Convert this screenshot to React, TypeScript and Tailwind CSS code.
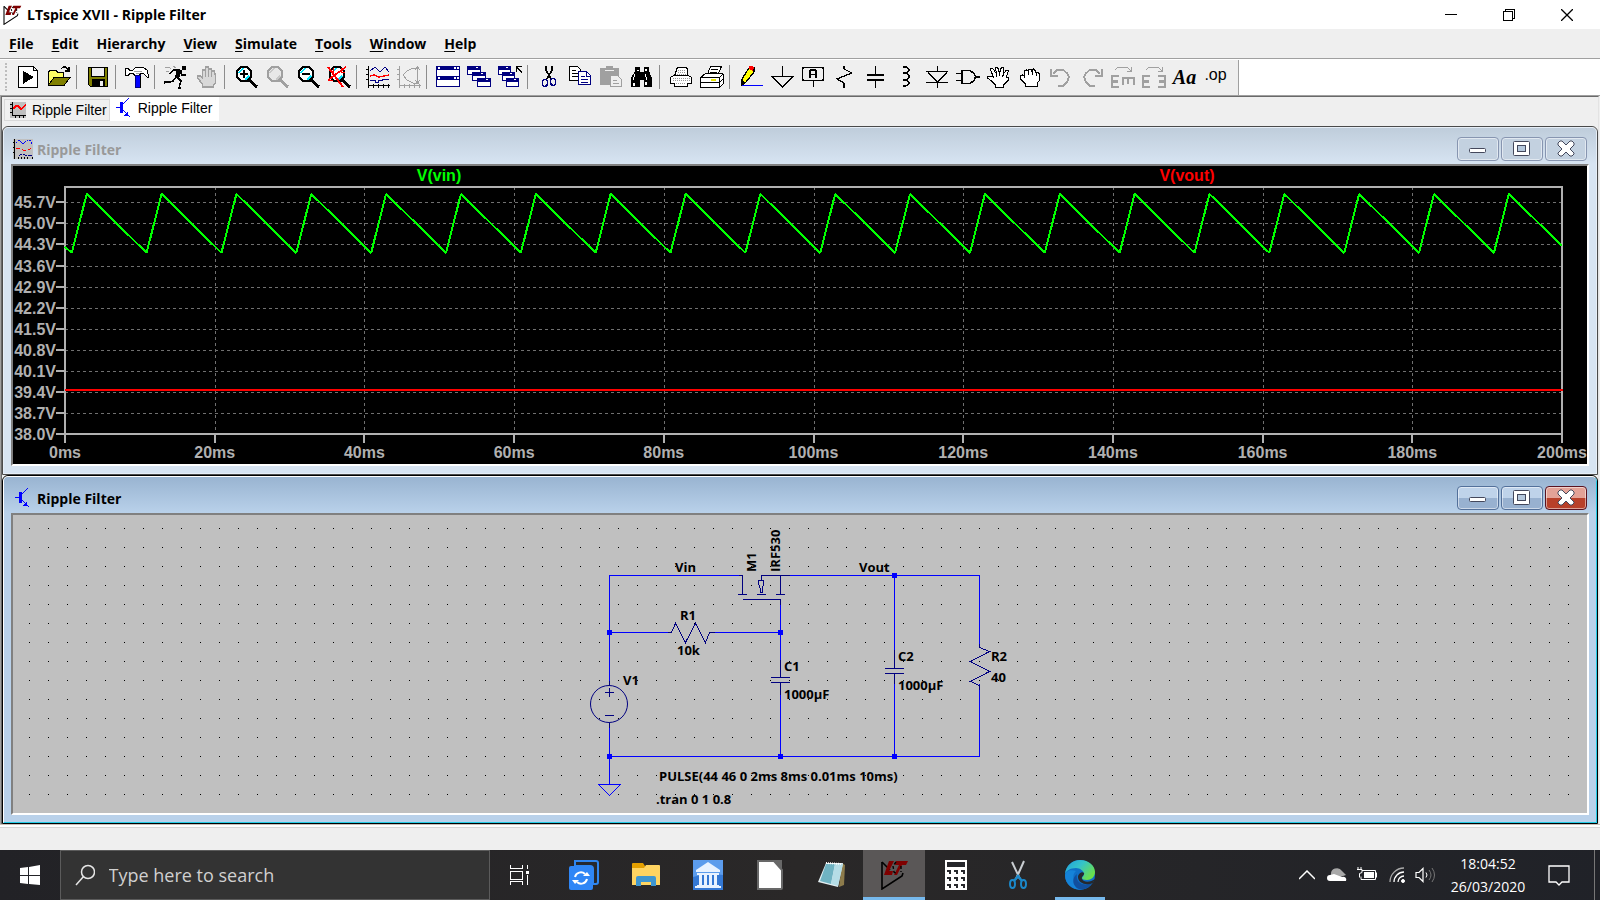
import React, { FC, ReactNode } from "react";

interface ToolItem {
  label: string;
  icon: ReactNode;
  disabled?: boolean;
}

interface MdiWindowProps {
  title: string;
  icon: ReactNode;
  active?: boolean;
  children: ReactNode;
}

const Icon: FC<{ children: ReactNode }> = ({ children }) => (
  <svg width="24" height="24" viewBox="0 0 24 24" fill="none" shapeRendering="crispEdges" aria-hidden="true">
    {children}
  </svg>
);

const Lens: FC<{ color: string; glass: string; shine: string }> = ({ color, glass, shine }) => (
  <>
    <path d="M7 2h6l4 4v6l-4 4H7l-4-4V6z" fill={glass} stroke={color} strokeWidth="1.6" />
    <path d="M5 8l4-5M11 15l4-4" stroke={shine} strokeWidth="1.5" />
    <path d="M15 15l8 7" stroke={color} strokeWidth="3" />
  </>
);

const LtLogo: FC<{ size: number }> = ({ size }) => (
  <svg width={size} height={size} viewBox="0 0 30 30" fill="none" aria-hidden="true">
    <path d="M3 2v27L23 16l1-3" stroke="#000" strokeWidth="1.6" />
    <path d="M3 2l8 8" stroke="#000" strokeWidth="1.6" />
    <path d="M10 1h5l-5 10h4l-1 4H5z" fill="#7f0000" />
    <path d="M17 1h12l-2 4h-4l-5 10h-3l5-10h-4z" fill="#7f0000" />
    <path d="M17 2l-3 4 1 6 3 2M22 6v6" stroke="#000" strokeWidth="1.4" strokeDasharray="3 2" />
  </svg>
);

const WaveIcon: FC = () => (
  <svg width="20" height="20" viewBox="0 0 20 20" fill="none" shapeRendering="crispEdges" aria-hidden="true">
    <path fill="#c0c0c0" d="M0 0h20v20H0z" />
    <path d="M1 0v20M0 3h2M0 8h2M0 13h2M5 20v-2M8 20v-2M11 20v-2M14 20v-2M19 20v-2" stroke="#000" />
    <path d="M3 4l3-3 4 4 4-4h3l2 4" stroke="#0000ff" strokeDasharray="2 1" />
    <path d="M3 9h3l4 2h5l4-2" stroke="#f00" strokeDasharray="4 2" />
    <path d="M6 17l2-2 4 1h7" stroke="#000080" strokeDasharray="4 1" />
  </svg>
);

const TransistorIcon: FC = () => (
  <svg width="20" height="20" viewBox="0 0 20 20" fill="none" stroke="#0000ff" shapeRendering="crispEdges" aria-hidden="true">
    <path d="M2 9.500h4" strokeWidth="1" />
    <path d="M7.500 4v11" strokeWidth="3" />
    <path d="M9 6l3-3 3-3M9 12l7 7" strokeWidth="1.200" />
    <path d="M14 13v5h-4z" fill="#0000ff" stroke="none" />
  </svg>
);

const GREY = "#a0a0a0";

const toolGroups: ToolItem[][] = [
  [
    {
      label: "Run netlist",
      icon: (
        <Icon>
          <path d="M2.500 1.500h15l4 4v17h-19zM17.500 1.500v4h4" fill="#fff" stroke="#000" />
          <path d="M7 6l11 6-11 7z" fill="#000" />
        </Icon>
      ),
    },
    {
      label: "Open",
      icon: (
        <Icon>
          <path d="M1.500 20V7l2-2h5l2 2h6v5" fill="#ffff66" stroke="#000" />
          <path d="M1.500 20l6-8h16l-6 8z" fill="#808000" stroke="#000" />
          <path d="M14 4l2-2h3l3 4M18 6h4V2" stroke="#000" strokeWidth="1.300" />
        </Icon>
      ),
    },
  ],
  [
    {
      label: "Save",
      icon: (
        <Icon>
          <path d="M2.500 2.500h19v19h-17l-2-2z" fill="#808000" stroke="#000" />
          <path fill="#efefef" stroke="#000" d="M5.500 2.500h13v9h-13z" />
          <path fill="#000" d="M6 14h13v8H6z" />
          <path fill="#efefef" d="M14 16h3v5h-3z" />
        </Icon>
      ),
    },
  ],
  [
    {
      label: "Control panel",
      icon: (
        <Icon>
          <path d="M.500 3.500h3l1 2h3l3-3h8l4 3 1 7h-1l-4-4h-3l-1 2h-5l-1-2h-4l-1 2h-3z" fill="#fff" stroke="#000" />
          <path d="M9 6h8M11 8h4" stroke="#a0a0a0" />
          <path d="M10.500 10.500h5v12h-5z" fill="#0000ff" stroke="#000080" />
          <path d="M15 11v12" stroke="#000" />
        </Icon>
      ),
    },
  ],
  [
    {
      label: "Run",
      icon: (
        <Icon>
          <path d="M18 1h4v4h-4z" fill="#000" />
          <path d="M9 5h7M9 5L6 9M17 6l1 4h4M13 12l4 4-2 7h2M12 12l-3 4-3 1H1l-1 2" stroke="#000" strokeWidth="1.500" />
          <path d="M13 4l5 1-3 8-4-1z" fill="#000" />
          <path d="M1 2h4l2 2M2 6h3M9 1l3 2" stroke={GREY} />
        </Icon>
      ),
    },
    {
      label: "Halt",
      disabled: true,
      icon: (
        <Icon>
          <path
            d="M7.500 22v-3l-5-6v-2h3l2 2V5h3v-3h3v2h3v2h3v3h1v9l-2 2v2z"
            fill="#d8d8d8"
            stroke={GREY}
            strokeWidth="1.500"
          />
          <path d="M10.500 4v8M13.500 3v9M16.500 5v7" stroke={GREY} strokeWidth="1.500" />
        </Icon>
      ),
    },
  ],
  [
    {
      label: "Zoom in",
      icon: (
        <Icon>
          <Lens color="#000" glass="#fff" shine="#00e5ff" />
          <path d="M10 5v8M6 9h8" stroke="#000" strokeWidth="2" />
        </Icon>
      ),
    },
    {
      label: "Pan",
      disabled: true,
      icon: (
        <Icon>
          <Lens color={GREY} glass="#e8e8e8" shine="#c8c8c8" />
        </Icon>
      ),
    },
    {
      label: "Zoom out",
      icon: (
        <Icon>
          <Lens color="#000" glass="#fff" shine="#00e5ff" />
          <path d="M6 9h8" stroke="#000" strokeWidth="2" />
        </Icon>
      ),
    },
    {
      label: "Zoom full extents",
      icon: (
        <Icon>
          <Lens color="#000" glass="#fff" shine="#00e5ff" />
          <path d="M1 2l15 20M19 2L1 15" stroke="#f00" strokeWidth="1.800" />
          <path d="M6 3v5M1 15h5M14 3v4h4" stroke="#f00" />
        </Icon>
      ),
    },
  ],
  [
    {
      label: "Autorange",
      icon: (
        <Icon>
          <path d="M2.500 1v22M0 4.500h3M0 9.500h3M0 14.500h3M2 20.500h22M7.500 19v4M12.500 19v4M17.500 19v4M22.500 19v4" stroke="#000" />
          <path d="M4 6l5-4 5 5 5-5 4 5" stroke="#000080" />
          <path d="M4 11l4-1 5 2 5-1 5-1" stroke="#f00" strokeWidth="1.300" />
          <path d="M4 15.500h5v2h3v-2h4v-1h7" stroke="#000080" />
        </Icon>
      ),
    },
    {
      label: "Nyquist",
      disabled: true,
      icon: (
        <Icon>
          <path
            d="M2.500 1v22M0 4.500h3M0 9.500h3M0 14.500h3M2 20.500h22M7.500 19v4M12.500 19v4M17.500 19v4M22.500 19v4"
            stroke={GREY}
          />
          <path d="M22 3h-6l-6 3-4 4 4 5 6 3h6M20.500 2v16M18 5l2.500-3L23 5M18 15l2.500 3 2.500-3" stroke={GREY} />
        </Icon>
      ),
    },
  ],
  [
    {
      label: "Tile windows",
      icon: (
        <Icon>
          <path d="M.500 1.500h23v20H.500zM.500 11.500h23" fill="#fff" stroke="#000080" />
          <path d="M0 1h24v4H0zM0 11h24v4H0z" fill="#000080" />
          <path d="M2 2h2v2H2zM18 2h2v2h-2zM21 2h2v2h-2zM2 12h2v2H2zM18 12h2v2h-2zM21 12h2v2h-2z" fill="#fff" />
        </Icon>
      ),
    },
    {
      label: "Cascade windows",
      icon: (
        <Icon>
          {[0, 5, 10].map((o) => (
            <g key={o}>
              <path d={`M${o}.500 ${o * 1.2 + 1.5}h13v8h-13z`} fill="#fff" stroke="#000080" />
              <path d={`M${o} ${o * 1.2 + 1}h14v4h-14z`} fill="#000080" />
              <path d={`M${o + 9} ${o * 1.2 + 2}h2v1h-2z`} fill="#fff" />
            </g>
          ))}
        </Icon>
      ),
    },
    {
      label: "Close windows",
      icon: (
        <Icon>
          {[0, 4, 8].map((o) => (
            <g key={o}>
              <path d={`M${o}.500 ${o * 1.5 + 1.5}h12v8h-12z`} fill="#fff" stroke="#000080" />
              <path d={`M${o} ${o * 1.5 + 1}h13v4h-13z`} fill="#000080" />
              <path d={`M${o + 8} ${o * 1.5 + 2}h2v1h-2z`} fill="#fff" />
            </g>
          ))}
          <path d="M24 8l-5-6M18.500 7V1.500H24" stroke="#000" strokeWidth="1.500" />
        </Icon>
      ),
    },
  ],
  [
    {
      label: "Cut",
      icon: (
        <Icon>
          <path d="M9 1v4l5 9M15 1v4l-5 9" stroke="#000" strokeWidth="1.600" />
          <path d="M6.500 14.500h3l1 2v3l-2 2h-2l-1-2v-3zM14.500 13.500h3l1 2v3l-1 2h-2l-2-2v-3z" stroke="#000080" strokeWidth="1.500" />
        </Icon>
      ),
    },
    {
      label: "Copy",
      icon: (
        <Icon>
          <path d="M1.500 1.500h8l3 3v11h-11z" fill="#fff" stroke="#000" />
          <path d="M4 5h4M4 8h6M4 11h6" stroke="#000" />
          <path d="M10.500 6.500h8l4 4v9h-12z" fill="#fff" stroke="#000080" />
          <path d="M13 11h4M13 14h7M13 17h7M18.500 7v4h4" stroke="#000080" />
        </Icon>
      ),
    },
    {
      label: "Paste",
      disabled: true,
      icon: (
        <Icon>
          <path d="M1 3h6V1h7v2h6v17H1z" fill={GREY} />
          <path d="M6 5h9" stroke="#efefef" />
          <path d="M11.500 10.500h7l4 4v7h-11z" fill="#efefef" stroke={GREY} />
          <path d="M14 15h4M14 18h6" stroke={GREY} />
        </Icon>
      ),
    },
    {
      label: "Find",
      icon: (
        <Icon>
          <path d="M5 2h5v5h4V2h5v4l3 7v9h-8v-7h-4v7H1v-9l4-7z" fill="#000" />
          <path d="M5 9l-2 6M15 9l2 6M8 5v1M16 4v2M4 18v3M16 17v3" stroke="#fff" strokeWidth="1.200" />
        </Icon>
      ),
    },
  ],
  [
    {
      label: "Print preview",
      icon: (
        <Icon>
          <path d="M5.500 11l3-9h8l2 2v7" fill="#fff" stroke="#000" />
          <path d="M1.500 12.500l3-2h15l3 2v6h-4v3h-13v-3h-4z" fill="#fff" stroke="#000" />
          <path d="M9 5h7M9 7h8M8 9h9M4 13h17M4 15h17M7 18h10" stroke="#999" strokeDasharray="1 1" />
        </Icon>
      ),
    },
    {
      label: "Print",
      icon: (
        <Icon>
          <path d="M7.500 9l3-7.500h11L18 9" fill="#fff" stroke="#000" />
          <path d="M11 4h7M10 7h7" stroke="#000" />
          <path d="M.500 12.500l5-4h17l1 2v8l-4 4H.500z" fill="#fff" stroke="#000" />
          <path d="M1 12.500h18v9M19 13l4-4M1 17.500h18l4-3" stroke="#000" />
          <path d="M11 15h5" stroke="#e6e600" strokeWidth="2" />
        </Icon>
      ),
    },
  ],
  [
    {
      label: "Wire",
      icon: (
        <Icon>
          <path d="M3 20V14L10 3h5v4L7 17z" fill="#ff0" stroke="#000" strokeWidth="1.200" />
          <path d="M10 1h4l1 2-1 3-4-2z" fill="#f00" />
          <path d="M2 15l4 2-3 4H2z" fill="#000" />
          <path d="M3 20.500h21" stroke="#00f" />
        </Icon>
      ),
    },
    {
      label: "Ground",
      icon: (
        <Icon>
          <path d="M12.500 1v10M1 11.500h23M2 12l10.500 10L23 12" stroke="#000" strokeWidth="1.400" />
        </Icon>
      ),
    },
    {
      label: "Label net",
      icon: (
        <Icon>
          <rect x="1.500" y="2.500" width="21" height="13" rx="2" stroke="#000" strokeWidth="1.800" />
          <path d="M12.500 16v6" stroke="#000" />
          <path d="M9 13V6l1-1h4l1 1v7M9 9.500h6" stroke="#000" strokeWidth="1.500" />
        </Icon>
      ),
    },
    {
      label: "Resistor",
      icon: (
        <Icon>
          <path d="M12 1v3l8 4-15 6 7 4v5" stroke="#000" strokeWidth="1.300" />
        </Icon>
      ),
    },
    {
      label: "Capacitor",
      icon: (
        <Icon>
          <path d="M12.500 1v8M12.500 15v8" stroke="#000" strokeWidth="1.500" />
          <path d="M4 10h17M4 15h17" stroke="#000" strokeWidth="2" />
        </Icon>
      ),
    },
    {
      label: "Inductor",
      icon: (
        <Icon>
          <path d="M9 2h3l3 2v2l-3 2H9M12 8l3 2v3l-3 2H9M12 15l3 2v2l-3 2H9" stroke="#000" strokeWidth="1.400" />
        </Icon>
      ),
    },
    {
      label: "Diode",
      icon: (
        <Icon>
          <path d="M12.500 1v6M12.500 17v6M1 6.500h22M1 17.500h22M3 7l9.500 10L22 7" stroke="#000" strokeWidth="1.400" />
        </Icon>
      ),
    },
    {
      label: "Component",
      icon: (
        <Icon>
          <path d="M6 5.500h8l4 3 1.500 3-1.500 4-4 3H6zM0 8.500h6M0 15.500h6M19 12h5" stroke="#000" strokeWidth="1.600" />
        </Icon>
      ),
    },
    {
      label: "Move",
      icon: (
        <Icon>
          <path
            d="M8.500 22v-2l-4-4-4-3v-2h3l3 1-3-7V3h2l4 6-1-7h2l2 6 2-6h2v7l3-4h2l-2 7h2v3l-5 5v2z"
            fill="#fff"
            stroke="#000"
          />
          <path d="M9.500 9v3M12.500 8v3M16.500 9l-1 3" stroke="#000" />
        </Icon>
      ),
    },
    {
      label: "Drag",
      icon: (
        <Icon>
          <path
            d="M7.500 21v-2l-5-5v-3l2-1 2 1V6l2-1 2 1V4h3v2l2-2 2 2v1h2l2 2v6l-2 3v3z"
            fill="#fff"
            stroke="#000"
          />
          <path d="M6.500 10v3M10.500 6v4M14.500 6v4M18.500 7v4" stroke="#000" />
        </Icon>
      ),
    },
    {
      label: "Undo",
      disabled: true,
      icon: (
        <Icon>
          <path d="M2 4v7h7M4 9l4-4h6l4 3 2 4-2 5-4 4h-5" stroke={GREY} strokeWidth="1.700" />
        </Icon>
      ),
    },
    {
      label: "Redo",
      disabled: true,
      icon: (
        <Icon>
          <path d="M22 4v7h-7M20 9l-4-4h-6L6 8l-2 4 2 5 4 4h5" stroke={GREY} strokeWidth="1.700" />
        </Icon>
      ),
    },
    {
      label: "Rotate",
      disabled: true,
      icon: (
        <Icon>
          <path d="M4 5l3-3h9l4 4M16 6h4V2" stroke={GREY} />
          <path d="M8 11H1v11h7M1 16.500h6M11 13h13M12 13v7M17 13v6M23 13v7" stroke={GREY} strokeWidth="2.500" />
        </Icon>
      ),
    },
    {
      label: "Mirror",
      disabled: true,
      icon: (
        <Icon>
          <path d="M4 5l3-3h9l4 4M16 6h4V2" stroke={GREY} />
          <path d="M8 11H1v11h7M1 16.500h6M16 11h7v11h-7M23 16.500h-6" stroke={GREY} strokeWidth="2.500" />
        </Icon>
      ),
    },
    {
      label: "Text",
      icon: <span className="font-['Liberation_Serif',serif] text-[20px] font-bold italic leading-6">Aa</span>,
    },
    {
      label: "SPICE directive",
      icon: <span className="pb-1 font-['Liberation_Sans',sans-serif] text-[16px] leading-5">.op</span>,
    },
  ],
];

const menus = ["File", "Edit", "Hierarchy", "View", "Simulate", "Tools", "Window", "Help"];

// Some menus take their second letter as the access key
const accessKeyIndex: Record<string, number> = { Hierarchy: 1 };

const TitleBar: FC = () => (
  <header className="flex h-[29px] items-center bg-white pl-0.5">
    <LtLogo size={20} />
    <h1 className="ml-[5px] flex-1 text-[14px] font-bold">LTspice XVII - Ripple Filter</h1>
    <button aria-label="Minimize" className="flex h-full w-[58px] items-center justify-center">
      <svg width="12" height="12" shapeRendering="crispEdges">
        <path d="M0 5.500h12" stroke="#000" />
      </svg>
    </button>
    <button aria-label="Restore" className="flex h-full w-[58px] items-center justify-center">
      <svg width="12" height="12" fill="none" stroke="#000" shapeRendering="crispEdges">
        <path d="M.500 2.500h9v9h-9zM2.500 2V.500h9v9H10" />
      </svg>
    </button>
    <button aria-label="Close" className="mr-1 flex h-full w-[58px] items-center justify-center">
      <svg width="12" height="12" stroke="#000">
        <path d="M0 0l12 12M12 0L0 12" strokeWidth="1.300" />
      </svg>
    </button>
  </header>
);

const MenuBar: FC = () => (
  <nav className="flex h-[30px] items-center border-b border-[#a0a0a0] bg-[#efefef]">
    {menus.map((menu) => {
      const key = accessKeyIndex[menu] ?? 0;
      return (
        <button key={menu} className="px-[9px] text-[14px] font-bold leading-6">
          {menu.slice(0, key)}
          <span className="underline underline-offset-2">{menu[key]}</span>
          {menu.slice(key + 1)}
        </button>
      );
    })}
  </nav>
);

const Toolbar: FC = () => (
  <div className="flex h-9 border-t border-white bg-white">
    <div role="toolbar" className="flex items-center border-r border-[#a0a0a0] bg-[#efefef] pb-0.5 pr-[7px]">
      <span className="ml-[5px] mr-[5px] h-7 w-0.5 border-l-2 border-dotted border-[#bdbdbd]" />
      {toolGroups.map((group, i) => (
        <React.Fragment key={i}>
          {i > 0 && (
            <span className="flex w-2 pl-0.5">
              <span className="h-6 w-px bg-[#8c8c8c]" />
            </span>
          )}
          {group.map((tool) => (
            <button
              key={tool.label}
              aria-label={tool.label}
              disabled={tool.disabled}
              className="flex h-7 w-[31px] items-center justify-center"
            >
              {tool.icon}
            </button>
          ))}
        </React.Fragment>
      ))}
    </div>
  </div>
);

const Tabs: FC = () => (
  <div className="flex h-[29px] items-start pl-0.5 font-['Liberation_Sans',sans-serif] text-[14px]">
    <button className="mt-0.5 flex h-[22px] items-center gap-1.5 border border-[#d9d9d9] bg-[#f0f0f0] pl-[5px] pr-0.5">
      <svg width="16" height="16" fill="none" shapeRendering="crispEdges" aria-hidden="true">
        <path fill="#c0c0c0" d="M0 0h16v16H0z" />
        <path d="M2.500 0v13M2 13.500h14M0 2.500h2M0 6.500h2M0 10.500h2M5.500 13v3M9.500 13v3M13.500 13v3" stroke="#000" />
        <path d="M3 7l3-3h2l3 3 5-4" stroke="#f00" strokeWidth="1.500" />
      </svg>
      Ripple Filter
    </button>
    <button className="flex h-6 items-center gap-1 bg-white pb-0.5 pl-1 pr-[7px]">
      <TransistorIcon />
      Ripple Filter
    </button>
  </div>
);

const MdiWindow: FC<MdiWindowProps> = ({ title, icon, active, children }) => {
  const captionButton = active
    ? "border-[#53709a] bg-linear-to-b from-[#bfd3ea] from-50% to-[#98b1d0] to-50%"
    : "border-[#8795b0] bg-[#c3d1e0]";

  return (
    <section className={`rounded-t-md border ${active ? "border-black" : "border-[#4a4a4a]"}`}>
      <div
        className={`rounded-t-md border px-[7px] pb-[7px] ${
          active
            ? "border-b-[#22cbe6] border-l-white border-r-[#22cbe6] border-t-white bg-[#b9d1ea]"
            : "border-[#e6eef7] bg-[#d7e4f2]"
        }`}
      >
        <div
          className={`-mx-[7px] flex h-9 items-center rounded-t px-[9px] pt-1.5 ${
            active ? "bg-linear-to-b from-[#99b4d1] to-[#b9d1ea]" : "bg-linear-to-b from-[#bfcddb] to-[#d7e4f2]"
          }`}
        >
          {icon}
          <h2 className={`ml-1 flex-1 text-[14px] font-bold ${active ? "text-black" : "text-[#999]"}`}>{title}</h2>
          <div className="flex gap-0.5 text-[#44485c]">
            <button
              aria-label="Minimize window"
              className={`flex h-6 w-[42px] items-center justify-center rounded-sm border ring-1 ring-inset ring-white/50 ${captionButton}`}
            >
              <svg width="18" height="18" fill="#fff" stroke="currentColor">
                <rect x=".500" y="8.500" width="16" height="4" rx="1" />
              </svg>
            </button>
            <button
              aria-label="Maximize window"
              className={`flex h-6 w-[42px] items-center justify-center rounded-sm border ring-1 ring-inset ring-white/50 ${captionButton}`}
            >
              <svg width="18" height="18" fill="#fff" stroke="currentColor">
                <rect x=".500" y="1.500" width="16" height="14" rx="1" />
                <rect x="4.500" y="5.500" width="8" height="6" fill="#b5c8dd" />
              </svg>
            </button>
            <button
              aria-label="Close window"
              className={`flex h-6 w-[42px] items-center justify-center rounded-sm border ring-1 ring-inset ring-white/50 ${
                active
                  ? "border-[#5a1220] bg-linear-to-b from-[#e3a297] from-50% to-[#b8402a] to-50%"
                  : "border-[#8795b0] bg-[#c3d1e0]"
              }`}
            >
              <svg width="18" height="18" fill="#fff" stroke="currentColor">
                <path d="M1 3l2-2h2l4 4 4-4h2l2 2v2l-4 4 4 4v1l-2 2h-2l-4-4-4 4H3l-2-2v-1l4-4-4-4z" strokeLinejoin="round" />
              </svg>
            </button>
          </div>
        </div>
        <div className="border-2 border-b-white border-l-[#808080] border-r-white border-t-[#808080]">{children}</div>
      </div>
    </section>
  );
};

const PLOT = { left: 52, right: 1549, top: 21, bottom: 268 };
const xTicks = Array.from({ length: 11 }, (_, i) => i * 20);
const yTicks = Array.from({ length: 12 }, (_, i) => 38 + i * 0.7);

const toX = (ms: number) => PLOT.left + (ms / 200) * (PLOT.right - PLOT.left);
const toY = (volts: number) => PLOT.bottom - ((volts - 38) / 0.7) * 21.06;

// 44 V to 46 V sawtooth: 2 ms rise, 8 ms fall, starting 1 ms in
const vinPoints = [
  [0, 44.22],
  ...Array.from({ length: 20 }, (_, i) => [
    [i * 10 + 0.9, 44.02],
    [i * 10 + 2.9, 45.98],
  ]).flat(),
  [200, 44.25],
];

const WaveformPlot: FC = () => (
  <svg viewBox="0 0 1574 298" className="block h-auto w-full bg-black font-['Liberation_Sans',sans-serif] text-[16px] font-bold">
    <g stroke="#707070" strokeDasharray="3 3" shapeRendering="crispEdges">
      {yTicks.slice(1).map((v) => (
        <path key={v} d={`M${PLOT.left} ${Math.round(toY(v))}.500H${PLOT.right}`} />
      ))}
      {xTicks.slice(1, -1).map((ms) => (
        <path key={ms} d={`M${Math.round(toX(ms))}.500 ${PLOT.top}V${PLOT.bottom}`} />
      ))}
    </g>
    <g stroke="#b0b0b0" strokeWidth="2" fill="none" shapeRendering="crispEdges">
      <path d={`M${PLOT.left} ${PLOT.top}H${PLOT.right}V${PLOT.bottom}H${PLOT.left}z`} />
      {yTicks.map((v) => (
        <path key={v} d={`M${PLOT.left - 9} ${Math.round(toY(v))}h9`} />
      ))}
      {xTicks.map((ms) => (
        <path key={ms} d={`M${Math.round(toX(ms))} ${PLOT.bottom}v9`} />
      ))}
    </g>
    <polyline
      points={vinPoints.map(([ms, v]) => `${toX(ms)},${toY(v)}`).join(" ")}
      fill="none"
      stroke="#00ff00"
      strokeWidth="2"
      strokeLinejoin="bevel"
      shapeRendering="crispEdges"
    />
    <path d={`M${PLOT.left} 224H${PLOT.right + 1}`} stroke="#f00" strokeWidth="2" />
    <g fill="#b0b0b0">
      {yTicks.map((v) => (
        <text key={v} x={PLOT.left - 9} y={Math.round(toY(v)) + 6} textAnchor="end">
          {v.toFixed(1)}V
        </text>
      ))}
      {xTicks.map((ms) => (
        <text key={ms} x={toX(ms)} y="292" textAnchor="middle">
          {ms}ms
        </text>
      ))}
    </g>
    <text x="426" y="15" textAnchor="middle" fill="#00ff00">
      V(vin)
    </text>
    <text x="1174" y="15" textAnchor="middle" fill="#f00">
      V(vout)
    </text>
  </svg>
);

const junctions = [
  [596, 117],
  [767, 117],
  [596, 241],
  [767, 241],
  [881, 241],
  [881, 60],
];

const schematicLabels = [
  { x: 662, y: 57, text: "Vin" },
  { x: 846, y: 57, text: "Vout" },
  { x: 667, y: 105, text: "R1" },
  { x: 664, y: 140, text: "10k" },
  { x: 610, y: 170, text: "V1" },
  { x: 771, y: 156, text: "C1" },
  { x: 771, y: 184, text: "1000µF" },
  { x: 885, y: 146, text: "C2" },
  { x: 885, y: 175, text: "1000µF" },
  { x: 978, y: 146, text: "R2" },
  { x: 978, y: 167, text: "40" },
  { x: 646, y: 266, text: "PULSE(44 46 0 2ms 8ms 0.01ms 10ms)" },
  { x: 643, y: 289, text: ".tran 0 1 0.8" },
];

const Schematic: FC = () => (
  <svg
    viewBox="0 0 1574 298"
    className="block h-auto w-full bg-[#c0c0c0] font-['Open_Sans','Noto_Sans',sans-serif] text-[13px] font-bold"
  >
    <defs>
      <pattern id="grid" x="16" y="13" width="19" height="19" patternUnits="userSpaceOnUse">
        <rect width="1" height="1" />
      </pattern>
    </defs>
    <rect x="16" y="13" width="1541" height="268" fill="url(#grid)" />
    <g fill="none" stroke="#0000ff" transform="translate(.5 .5)" shapeRendering="crispEdges">
      <path d="M596 166V60H725M596 117H654M696 117H767M767 88V144M767 178V241M775 60H966V128" />
      <path d="M881 60V135M881 167V241M966 168V241H596V211M596 241V269" />
      <path d="M585 269h22l-11 11z" />
    </g>
    <g fill="none" stroke="#000080" transform="translate(.5 .5)" shapeRendering="crispEdges">
      <path d="M725 60h4v19M724 79h9M743 79h9M762 79h9M729 84h38v5" />
      <path d="M748 65V60h28M767 60v19M745 65h5v3l-1 6v3h-2v-3l-2-6z" />
      <path d="M654 117h4l4-9 10 19 10-19 10 19 4-10h5" />
      <path d="M767 144v18M757 162h19M757 167h19M767 167v12" />
      <path d="M881 134v19M871 153h19M871 158h19M881 158v10" />
      <path d="M966 128v4l10 4-19 10 19 10-19 10 9 4v4" />
      <path d="M596 165v5M596 207v5M591 177h9M596 172v9M591 200h9" />
      <circle cx="595.5" cy="188.5" r="18.5" shapeRendering="auto" />
    </g>
    {junctions.map(([x, y]) => (
      <rect key={`${x}-${y}`} x={x - 2} y={y - 2} width="5" height="5" fill="#0000ff" />
    ))}
    {schematicLabels.map(({ x, y, text }) => (
      <text key={`${x}-${y}`} x={x} y={y}>
        {text}
      </text>
    ))}
    <text transform="translate(743 57) rotate(-90)">M1</text>
    <text transform="translate(767 57) rotate(-90)">IRF530</text>
  </svg>
);

interface TaskApp {
  label: string;
  active?: boolean;
  running?: boolean;
  icon: ReactNode;
}

const taskApps: TaskApp[] = [
  {
    label: "Sync",
    icon: (
      <svg width="30" height="30" fill="none" aria-hidden="true">
        <path d="M6 1h21a2 2 0 012 2v19a2 2 0 01-2 2h-3V9a3 3 0 00-3-3H6z" fill="#26292f" stroke="#2f86f0" strokeWidth="2" />
        <rect y="6" width="24" height="24" rx="2" fill="#2f86f6" />
        <path d="M6 17a6 6 0 0110-3M18 19a6 6 0 01-10 3" stroke="#fff" strokeWidth="2" />
        <path d="M14 16h7l-3-4zM10 20H3l3 4z" fill="#fff" />
      </svg>
    ),
  },
  {
    label: "File Explorer",
    icon: (
      <svg width="30" height="30" aria-hidden="true">
        <path d="M1 4a1 1 0 011-1h10l2 3v5H1z" fill="#e5a000" />
        <path d="M1 8h12l2-3h13a1 1 0 011 1v19H1z" fill="#ffd461" />
        <path d="M5 26v-8a2 2 0 012-2h16a2 2 0 012 2v8h-5v-4H10v4z" fill="#3f96cf" />
      </svg>
    ),
  },
  {
    label: "Bank",
    icon: (
      <svg width="30" height="30" aria-hidden="true">
        <path d="M0 0h30v30H0z" fill="#3478d4" />
        <path d="M0 0h30v15Q14 12 0 17z" fill="#5c9cec" />
        <path d="M15 2L3 10v2h24v-2zM4 13h22v2H4zM6 15h3v10H6zM11 15h3v10h-3zM16 15h3v10h-3zM21 15h3v10h-3zM4 25h22v1H4zM2 26h26v2H2z" fill="#e8f2ff" />
      </svg>
    ),
  },
  {
    label: "LibreOffice",
    icon: (
      <svg width="30" height="30" aria-hidden="true">
        <path d="M3 1h16l8 9v18a1 1 0 01-1 1H3z" fill="#fff" stroke="#686868" strokeWidth="2" />
        <path d="M18 0h9v9z" fill="#686868" />
      </svg>
    ),
  },
  {
    label: "Notepad",
    icon: (
      <svg width="30" height="30" aria-hidden="true">
        <path d="M25 3l3 2-1 20-5 2z" fill="#8d7b4b" />
        <path d="M9 3L1 22l20 5 5-24z" fill="#e4eff2" />
        <path d="M9 4L3 21l11 3 4-20z" fill="#6fb3c2" />
        <path d="M18 4l-4 20 7 2 5-22z" fill="#b5dde6" />
        <path d="M9 3l16 1" stroke="#fff" strokeWidth="2" strokeDasharray="1 1" />
      </svg>
    ),
  },
  { label: "LTspice", active: true, icon: <LtLogo size={30} /> },
  {
    label: "Calculator",
    icon: (
      <svg width="30" height="30" shapeRendering="crispEdges" aria-hidden="true">
        <path d="M4 0h22v30H4z" fill="#fff" />
        <path
          d="M6 2h18v5H6zM6 10h4v4H8v-2H6zM13 10h4v4h-2v-2h-2zM20 10h4v4h-2v-2h-2zM6 17h4v4H8v-2H6zM13 17h4v4h-2v-2h-2zM20 17h4v4h-2v-2h-2zM6 24h4v4H8v-2H6zM13 24h4v4h-2v-2h-2zM20 24h4v4h-2v-2h-2z"
          fill="#26272b"
        />
      </svg>
    ),
  },
  {
    label: "Snipping Tool",
    icon: (
      <svg width="30" height="30" fill="none" aria-hidden="true">
        <path d="M9 2l8 17M21 1l-8 18" stroke="#c9cdd1" strokeWidth="2" />
        <ellipse cx="9.500" cy="24" rx="2.500" ry="4" stroke="#1b88c9" strokeWidth="2" />
        <ellipse cx="20.500" cy="24" rx="2.500" ry="4" stroke="#1b88c9" strokeWidth="2" />
        <path d="M11 21l4-5 4 5" stroke="#1b88c9" strokeWidth="2.400" />
      </svg>
    ),
  },
  {
    label: "Edge",
    running: true,
    icon: (
      <svg width="30" height="30" viewBox="0 0 30 30" aria-hidden="true">
        <defs>
          <linearGradient id="edgeTop" x1="0" y1="0" x2="1" y2="0.600">
            <stop offset="0" stopColor="#1f9ede" />
            <stop offset="0.500" stopColor="#35c3c9" />
            <stop offset="1" stopColor="#6be04a" />
          </linearGradient>
        </defs>
        <circle cx="15" cy="15" r="15" fill="#0f6fc6" />
        <path d="M0 14C1 5 8 0 15 0c9 0 15 6 15 12 0 5-4 8-8 8-3 0-5-1-5-2s2-2 2-4c0-3-4-6-8-6-6 0-10 3-11 6z" fill="url(#edgeTop)" />
        <path d="M11 11c-5 4-3 15 7 18-6 2-18-2-18-14 1-4 6-6 11-4z" fill="#1583d8" />
        <path d="M12 14c-2 8 6 13 15 9-5 8-14 8-17 3-3-4-2-9 2-12z" fill="#114f9e" />
        <path d="M19 13c1 2-3 3-2 6 2 4 9 3 13 0l-2 4c-7 3-15 0-15-6 0-3 4-6 6-4z" fill="#26292f" />
      </svg>
    ),
  },
];

const Taskbar: FC = () => (
  <footer className="flex h-[50px] items-stretch bg-linear-to-r from-[#222226] via-[#2a2828] to-[#202228] text-white">
    <button aria-label="Start" className="flex w-[60px] items-center justify-center">
      <svg width="20" height="20" fill="#fff" aria-hidden="true">
        <path d="M0 3l8-1v8H0zM9 2l11-2v10H9zM0 11h8v8l-8-1zM9 11h11v9L9 19z" />
      </svg>
    </button>
    <label className="flex w-[430px] items-center border border-[#5b5b5b] bg-[#333]">
      <svg width="22" height="22" fill="none" stroke="#e6e6e6" strokeWidth="1.500" className="ml-3.5" aria-hidden="true">
        <circle cx="13" cy="8" r="6.500" />
        <path d="M8.500 12.500L1 21" />
      </svg>
      <input
        aria-label="Search"
        placeholder="Type here to search"
        className="ml-3.5 w-full bg-transparent text-[18px] outline-none placeholder:text-[#d0d0d0]"
      />
    </label>
    <button aria-label="Task View" className="flex w-[63px] items-center pl-[19px]">
      <svg width="22" height="22" fill="none" stroke="#fff" shapeRendering="crispEdges" aria-hidden="true">
        <path d="M1.500 1v3.500h12V1M1.500 21v-3.500h12V21M1.500 7.500h12v8h-12zM18.500 1v4M18.500 11v10" />
        <path d="M17 7h3v3h-3z" fill="#fff" stroke="none" />
      </svg>
    </button>
    {taskApps.map((app) => (
      <button
        key={app.label}
        aria-label={app.label}
        className={`relative flex w-[62px] items-center justify-center ${app.active ? "bg-[#5a5757]" : ""}`}
      >
        {app.icon}
        {(app.active || app.running) && (
          <span
            className={`absolute bottom-0 h-[3px] bg-[#76b9ed] ${app.active ? "inset-x-0" : "inset-x-1.5"}`}
          />
        )}
      </button>
    ))}
    <div className="ml-auto flex items-center">
      <button aria-label="Show hidden icons" className="mr-3">
        <svg width="16" height="10" fill="none" stroke="#fff" strokeWidth="1.500">
          <path d="M0 9l8-8 8 8" />
        </svg>
      </button>
      <svg width="20" height="14" className="mr-2.5" aria-label="OneDrive">
        <path d="M4 7a6 6 0 0111-4l4 4-9 3z" fill="#a8a8a8" />
        <path d="M3 13a3 3 0 010-6l4-1 8 3a3 3 0 014 4z" fill="#fff" />
      </svg>
      <svg width="20" height="16" className="mr-3" fill="none" stroke="#fff" aria-label="Battery">
        <path d="M5 3.500h13.500v9H4v-3M1 0v2M4 0v2M0 2.500h5v3l-2.500 1v4" />
        <path d="M7 5h10v6H7z" fill="#fff" stroke="none" />
        <path d="M19 6h1v4h-1z" fill="#fff" />
      </svg>
      <svg width="16" height="16" className="mr-2.5" fill="none" stroke="#fff" aria-label="Wi-Fi">
        <path d="M1 15A14 14 0 0115 1" stroke="#aaa" strokeWidth="1.300" />
        <path d="M5 15A10 10 0 0115 5M9 15a6 6 0 016-6" strokeWidth="1.300" />
        <circle cx="14" cy="14" r="1.500" fill="#fff" />
      </svg>
      <svg width="22" height="18" className="mr-[11px]" fill="none" stroke="#fff" aria-label="Volume">
        <path d="M1 6.500h3l4-4v13l-4-4H1z" strokeWidth="1.200" />
        <path d="M11 6.500q2 2.500 0 5" />
        <path d="M14 4q4 5 0 10M17 2q5 7 0 14" stroke="#777" />
      </svg>
      <div className="flex w-[80px] flex-col items-center text-[14px] leading-[23px]">
        <time>18:04:52</time>
        <time>26/03/2020</time>
      </div>
      <button aria-label="Notifications" className="ml-5 mr-6">
        <svg width="22" height="22" fill="none" stroke="#fff" strokeWidth="1.300">
          <path d="M1 2h20v16h-7l-3 3-3-3H1z" />
        </svg>
      </button>
      <span className="mr-[5px] h-[50px] w-px bg-[#777]" />
    </div>
  </footer>
);

const App: FC = () => (
  <div className="flex min-h-screen flex-col bg-[#efefef] font-['Open_Sans','Noto_Sans',sans-serif] text-black">
    <TitleBar />
    <MenuBar />
    <Toolbar />
    <main className="border-l border-t border-[#a0a0a0] pr-px">
      <div className="border-l border-r border-t border-l-[#696969] border-r-[#e3e3e3] border-t-[#696969]">
        <Tabs />
        <MdiWindow title="Ripple Filter" icon={<WaveIcon />}>
          <WaveformPlot />
        </MdiWindow>
        <MdiWindow title="Ripple Filter" icon={<TransistorIcon />} active>
          <Schematic />
        </MdiWindow>
      </div>
    </main>
    <div className="min-h-[26px] flex-1 border-t border-[#c8c0b8]">
      <div className="h-[3px] border-b border-[#d5d5d5] bg-white" />
    </div>
    <Taskbar />
  </div>
);

export default App;
